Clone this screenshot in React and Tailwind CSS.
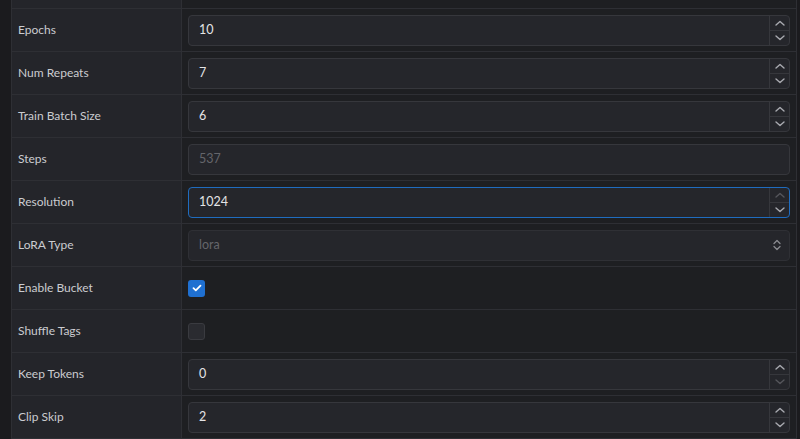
import React from 'react';

const Chevron = ({ dir = 'up', dim = false }) => (
  <svg width="10" height="6" viewBox="0 0 10 6" fill="none" className={dim ? 'text-[#55565b]' : 'text-[#a9aab0]'}>
    {dir === 'up' ? (
      <path d="M1 5L5 1.5L9 5" stroke="currentColor" strokeWidth="1.4" strokeLinecap="round" strokeLinejoin="round" />
    ) : (
      <path d="M1 1L5 4.5L9 1" stroke="currentColor" strokeWidth="1.4" strokeLinecap="round" strokeLinejoin="round" />
    )}
  </svg>
);

function NumberInput({ value, disabled, focused, upDim, downDim }) {
  const border = focused ? 'border-[#1f6cbf]' : 'border-[#36373c]';
  return (
    <div className={`flex h-[31px] w-full rounded-[4px] border ${border} bg-[#25262b]`}>
      <div className={`flex flex-1 items-center pl-[10px] text-[12.5px] ${disabled ? 'text-[#64656a]' : 'text-[#e4e4e6]'}`}>
        {value}
      </div>
      {!disabled && (
        <div className="flex w-[20px] flex-col border-l border-[#36373c]">
          <div className="flex flex-1 items-center justify-center border-b border-[#36373c]">
            <Chevron dir="up" dim={upDim} />
          </div>
          <div className="flex flex-1 items-center justify-center">
            <Chevron dir="down" dim={downDim} />
          </div>
        </div>
      )}
    </div>
  );
}

function SelectInput({ value }) {
  return (
    <div className="flex h-[31px] w-full items-center justify-between rounded-[4px] border border-[#2f3035] bg-[#25262b] pl-[10px] pr-[8px] text-[12.5px] text-[#64656a]">
      <span>{value}</span>
      <svg width="8" height="12" viewBox="0 0 8 12" fill="none" className="text-[#8a8b90]">
        <path d="M1 4.5L4 1.5L7 4.5M1 7.5L4 10.5L7 7.5" stroke="currentColor" strokeWidth="1.3" strokeLinecap="round" strokeLinejoin="round" />
      </svg>
    </div>
  );
}

function Checkbox({ checked }) {
  if (checked) {
    return (
      <div className="flex h-[17px] w-[17px] items-center justify-center rounded-[3px] bg-[#1f70d1]">
        <svg width="10" height="8" viewBox="0 0 10 8" fill="none">
          <path d="M1.5 4.2L3.8 6.3L8.5 1.7" stroke="white" strokeWidth="1.8" strokeLinecap="round" strokeLinejoin="round" />
        </svg>
      </div>
    );
  }
  return <div className="h-[17px] w-[17px] rounded-[3px] border border-[#3a3b40] bg-[#2a2b30]" />;
}

const rows = [
  { label: 'Epochs', kind: 'number', value: '10' },
  { label: 'Num Repeats', kind: 'number', value: '7' },
  { label: 'Train Batch Size', kind: 'number', value: '6' },
  { label: 'Steps', kind: 'number', value: '537', disabled: true },
  { label: 'Resolution', kind: 'number', value: '1024', focused: true, upDim: true },
  { label: 'LoRA Type', kind: 'select', value: 'lora' },
  { label: 'Enable Bucket', kind: 'check', checked: true },
  { label: 'Shuffle Tags', kind: 'check', checked: false },
  { label: 'Keep Tokens', kind: 'number', value: '0', downDim: true },
  { label: 'Clip Skip', kind: 'number', value: '2' },
];

export default function App() {
  return (
    <div
      className="flex h-[439px] w-[800px] overflow-hidden bg-[#1b1b1e] pl-[11px] pr-[3px]"
      style={{ fontFamily: 'Lato, "Open Sans", sans-serif' }}
    >
      <div className="flex flex-1 flex-col border-x border-[#2e2f34]">
        <div className="flex h-[9px] shrink-0 border-b border-[#2e2f34]">
          <div className="w-[170px] border-r border-[#2e2f34] bg-[#24252a]" />
          <div className="flex-1 bg-[#1e1f22]" />
        </div>
        {rows.map((row) => (
          <div key={row.label} className="flex h-[43px] shrink-0 border-b border-[#2e2f34]">
            <div className="flex w-[170px] items-center border-r border-[#2e2f34] bg-[#24252a] pl-[6px] text-[12px] text-[#cbccd0]">
              {row.label}
            </div>
            <div className="flex flex-1 items-center bg-[#1e1f22] pl-[6px] pr-[6px]">
              {row.kind === 'number' && (
                <NumberInput
                  value={row.value}
                  disabled={row.disabled}
                  focused={row.focused}
                  upDim={row.upDim}
                  downDim={row.downDim}
                />
              )}
              {row.kind === 'select' && <SelectInput value={row.value} />}
              {row.kind === 'check' && <Checkbox checked={row.checked} />}
            </div>
          </div>
        ))}
      </div>
    </div>
  );
}
